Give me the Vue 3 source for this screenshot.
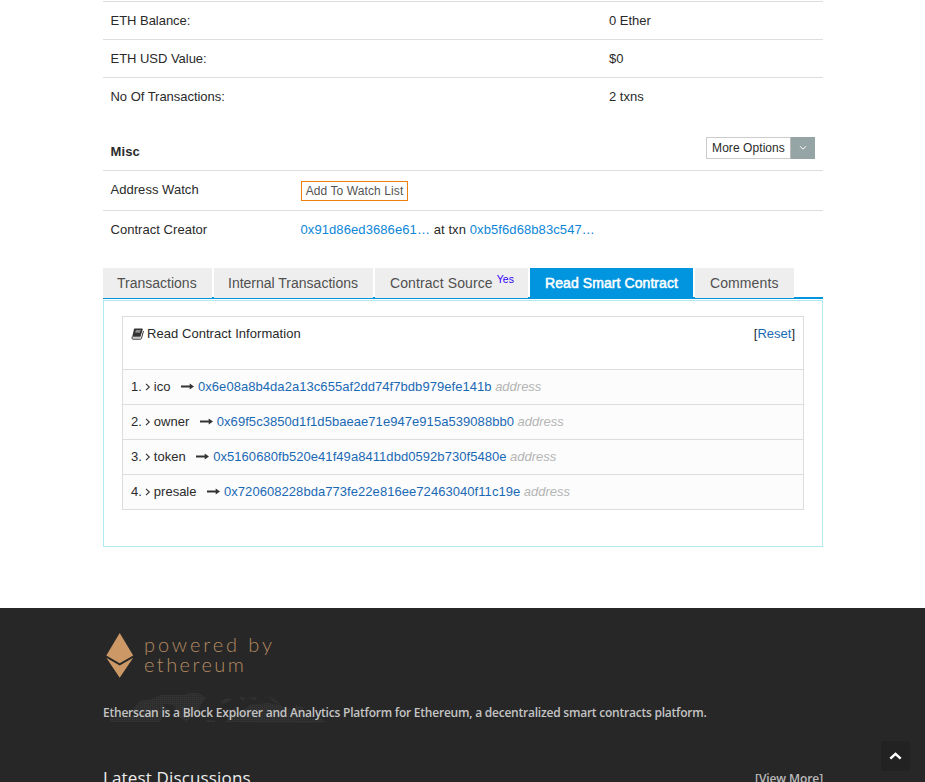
<script setup>
const summary = [
  { label: 'ETH Balance:', value: '0 Ether' },
  { label: 'ETH USD Value:', value: '$0' },
  { label: 'No Of Transactions:', value: '2 txns' },
]

const tabs = [
  { label: 'Transactions', size: 'w-transactions' },
  { label: 'Internal Transactions', size: 'w-internal' },
  { label: 'Contract Source', size: 'w-source', sup: 'Yes' },
  { label: 'Read Smart Contract', size: 'w-read', active: true },
  { label: 'Comments', size: 'w-comments' },
]

const fields = [
  { name: 'ico', value: '0x6e08a8b4da2a13c655af2dd74f7bdb979efe141b' },
  { name: 'owner', value: '0x69f5c3850d1f1d5baeae71e947e915a539088bb0' },
  { name: 'token', value: '0x5160680fb520e41f49a8411dbd0592b730f5480e' },
  { name: 'presale', value: '0x720608228bda773fe22e816ee72463040f11c19e' },
]
</script>

<template>
  <div class="page">
    <main class="container">
      <section class="summary">
        <div v-for="row in summary" :key="row.label" class="summary-row">
          <span class="summary-label">{{ row.label }}</span>
          <span>{{ row.value }}</span>
        </div>
      </section>

      <section class="misc">
        <div class="misc-head">
          <strong>Misc</strong>
          <div class="options">
            <button class="options-main">More Options</button>
            <button class="options-toggle" aria-label="Toggle">
              <svg width="8" height="6" viewBox="0 0 8 6"><path d="M1 1.200 4 4.200 7 1.200" fill="none" stroke="#fff" stroke-width="1" /></svg>
            </button>
          </div>
        </div>
        <div class="misc-row watch">
          <span class="misc-label">Address Watch</span>
          <a class="watch-btn">Add To Watch List</a>
        </div>
        <div class="misc-row">
          <span class="misc-label">Contract Creator</span>
          <span class="creator"><a>0x91d86ed3686e61…</a> at txn <a>0xb5f6d68b83c547…</a></span>
        </div>
      </section>

      <nav class="tabs">
        <a v-for="tab in tabs" :key="tab.label" class="tab" :class="[tab.size, { active: tab.active }]">
          <span>{{ tab.label }}</span><span v-if="tab.sup" class="sup">{{ tab.sup }}</span>
        </a>
      </nav>

      <section class="panel">
        <div class="contract">
          <div class="contract-head">
            <span class="contract-title">
              <svg class="book" width="13" height="12" viewBox="0 0 13 12">
                <path d="M3.600.5h7.300q1.100 0 .8 1L9.500 8.800H1.200L3 1.200Q3.200.5 3.600.5z" fill="#333" />
                <path d="M1.200 8.600Q.3 11.200 2 11.200h7.500q.7 0 .9-.7L12.500 3" fill="none" stroke="#333" stroke-width="1" />
                <path d="M1.500 9.800h8" stroke="#999" stroke-width=".8" />
                <path d="M4.900 2h4.900l-.9 2.800H4.100z" fill="#8c8c8c" />
              </svg>
              Read Contract Information
            </span>
            <span>[<a>Reset</a>]</span>
          </div>
          <div v-for="(field, i) in fields" :key="field.name" class="field">
            <span>{{ i + 1 }}.</span>
            <svg class="angle" width="6" height="8" viewBox="0 0 6 8"><path d="M1 .9 4.300 4 1 7.100" fill="none" stroke="#333" stroke-width="1.100" /></svg>
            <span>{{ field.name }}</span>
            <svg class="arrow" width="13" height="7" viewBox="0 0 13 7"><path d="M0 2.600h8.700V.6L13 3.500 8.700 6.400v-2H0z" fill="#333" /></svg>
            <a>{{ field.value }}</a>
            <em>address</em>
          </div>
        </div>
      </section>
    </main>

    <footer class="footer">
      <div class="footer-inner">
        <div class="brand">
          <svg class="gem" width="28" height="46" viewBox="0 0 28 46">
            <path d="M13.700 0 27.200 22.500 13.700 30.200.3 22.500z" fill="#cc9966" />
            <path d="M.3 24.800 13.700 32.600 27.200 24.800 13.700 44.800z" fill="#cc9966" />
          </svg>
          <div class="brand-text">
            <span class="powered">powered by</span>
            <span class="ethereum">ethereum</span>
          </div>
        </div>
        <div class="about">
          <svg class="map" width="225" height="30" viewBox="0 0 225 30">
            <defs>
              <pattern id="dots" width="2" height="2" patternUnits="userSpaceOnUse">
                <rect width="2" height="2" fill="#2d2d2d" />
                <rect width="1" height="1" fill="#383838" />
              </pattern>
            </defs>
            <path fill="url(#dots)" d="M26 15 32 8 44 6 52 2 77 2 80 0 90 0 98 5 93 11 90 18 84 22 79 29 71 24 66 12 55 11 62 20 54 24 52 29H2V25L26 23zM112 8l8-3 4 2-9 4zM130 3l8 2-3 3zM138 5l10-1v3zM160 3l8 4 4 5-8-4zM98 27h9v2h-9zM117 29l5-7 12-4 8-6 18-2 12 2 8 4h8v-4l8 3-2 5 10 2-4 4h14l4 3-18 1zM123 19l5-6 3 3z" />
          </svg>
          <p class="about-text">Etherscan is a Block Explorer and Analytics Platform for Ethereum, a decentralized smart contracts platform.</p>
        </div>
        <div class="discussions">
          <h2>Latest Discussions</h2>
          <span class="more">[View More]</span>
        </div>
      </div>
      <button class="to-top" aria-label="Back to top">
        <svg width="13" height="8" viewBox="0 0 13 8"><path d="M1.300 6.600 6.500 1.900l5.200 4.700" fill="none" stroke="#fff" stroke-width="2.500" /></svg>
      </button>
    </footer>
  </div>
</template>

<style>
body {
  margin: 0;
  background: #fff;
}
</style>

<style scoped>
* {
  box-sizing: border-box;
}
.page {
  position: relative;
  height: 782px;
  overflow: hidden;
  display: flex;
  flex-direction: column;
  font: 13px/20px 'Liberation Sans', Arial, sans-serif;
  color: #2a2a2a;
}
.container {
  width: 720px;
  height: 608px;
  flex: none;
  margin-left: 103px;
  padding-top: 1px;
}
button {
  font: inherit;
  color: inherit;
  margin: 0;
  padding: 0;
  border: 0;
}
.summary-row {
  display: flex;
  height: 38px;
  padding: 9px 7.500px 0;
  border-top: 1px solid #ddd;
}
.summary-label {
  width: 498.500px;
  letter-spacing: -.03px;
}
.misc-head {
  display: flex;
  justify-content: space-between;
  height: 55px;
  padding: 22px 8px 0 7.500px;
}
.misc-head strong {
  padding-top: 5px;
  letter-spacing: .1px;
}
.options {
  display: flex;
  height: 22px;
}
.options-main {
  width: 85px;
  border: 1px solid #ccc;
  border-right-color: #bbb;
  background: #fff;
  font-size: 12px;
  letter-spacing: .07px;
}
.options-toggle {
  display: flex;
  align-items: center;
  justify-content: center;
  width: 24px;
  background: #95a5a6;
}
.misc-row {
  display: flex;
  height: 40px;
  padding: 9px 7.500px 0;
  border-top: 1px solid #ddd;
}
.misc-label {
  width: 190px;
  letter-spacing: .04px;
}
.watch-btn {
  width: 107px;
  height: 20px;
  margin: 1px 0 0 .5px;
  border: 1px solid #ee7f0c;
  line-height: 18px;
  font-size: 12px;
  letter-spacing: .1px;
  text-align: center;
  color: #555;
}
.creator {
  letter-spacing: .09px;
}
.creator a {
  color: #0d86d8;
}
.tabs {
  display: flex;
  gap: 2px;
  height: 31px;
  margin-top: 18px;
  border-bottom: 2px solid #0095de;
}
.tab {
  display: flex;
  height: 30px;
  padding-left: 15px;
  background: #eee;
  color: #505050;
  font-size: 14px;
  line-height: 30px;
  white-space: nowrap;
}
.w-transactions { width: 109px; padding-left: 14px; }
.w-internal { width: 159px; padding-left: 14px; }
.w-source { width: 153px; letter-spacing: .1px; }
.w-read { width: 163px; letter-spacing: .08px; }
.w-comments { width: 99px; letter-spacing: .1px; }
.tab.active {
  background: #0095de;
  color: #fff;
  -webkit-text-stroke: .5px #fff;
}
.sup {
  margin-left: 4px;
  font-size: 10.500px;
  line-height: 23px;
  color: #30f;
}
.panel {
  height: 247px;
  margin-top: 1px;
  padding: 15px 18px 0;
  border: 1px solid #aeeaf0;
}
.contract {
  border: 1px solid #ddd;
}
.contract-head {
  display: flex;
  justify-content: space-between;
  height: 52px;
  padding: 7px 8px 0;
}
.contract-title {
  display: flex;
  gap: 3px;
  letter-spacing: .05px;
}
.book {
  margin-top: 4px;
}
.contract a {
  color: #1a69b5;
}
.field {
  display: flex;
  height: 35px;
  padding: 7px 8px 0;
  border-top: 1px solid #ddd;
  background: #fcfcfc;
}
.field a {
  letter-spacing: .055px;
}
.angle {
  margin: 6px 3px 0 3px;
}
.arrow {
  margin: 6px 4px 0 10.500px;
}
.field em {
  margin-left: 3.500px;
  color: #b5b5b5;
}
.footer {
  flex: none;
  height: 174px;
  background: #272727;
}
.footer-inner {
  width: 720px;
  margin-left: 103px;
  padding-top: 25px;
}
.brand {
  display: flex;
  height: 46px;
  padding-left: 3px;
}
.brand-text {
  display: flex;
  flex-direction: column;
  margin-left: 10px;
  padding-top: 1px;
  font: 300 20px/20px Lato, sans-serif;
  color: #b58a60;
  white-space: nowrap;
}
.powered {
  letter-spacing: 2.900px;
}
.ethereum {
  letter-spacing: 2.450px;
}
.about {
  position: relative;
  height: 60px;
  padding-top: 23px;
}
.map {
  position: absolute;
  left: 5px;
  top: 14px;
}
.about-text {
  position: relative;
  margin: 0;
  font: 600 12px/22px 'Open Sans', sans-serif;
  letter-spacing: -.225px;
  color: #c4c4c4;
  white-space: nowrap;
}
.discussions {
  display: flex;
  justify-content: space-between;
  padding-top: 26px;
}
.discussions h2 {
  margin: 0;
  font: 400 17px/26px 'Open Sans', sans-serif;
  letter-spacing: .15px;
  color: #eee;
}
.more {
  padding-top: 4px;
  font: 600 12px/20px 'Open Sans', sans-serif;
  letter-spacing: -.1px;
  color: #bbb;
}
.to-top {
  position: absolute;
  left: 881px;
  top: 741px;
  display: flex;
  align-items: center;
  justify-content: center;
  width: 29px;
  height: 30px;
  border-radius: 3px;
  background: #222;
}
</style>
